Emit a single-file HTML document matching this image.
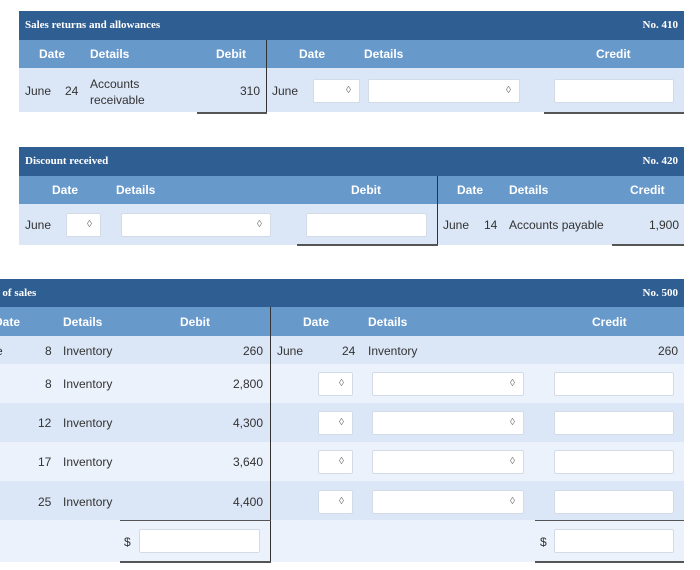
<!DOCTYPE html>
<html><head><style>
body{margin:0;width:700px;height:570px;background:#fff;position:relative;overflow:hidden;font-family:"Liberation Sans",sans-serif;font-size:12px;color:#333}
div{position:absolute;box-sizing:border-box}
.t{background:#2f5e93;color:#fff;font-family:"Liberation Serif",serif;font-weight:bold;font-size:11px;line-height:29px;padding-left:6px}
.h{background:#6899cb;color:#fff;font-weight:bold;font-size:12px}
.r1{background:#dbe6f6}
.r2{background:#ebf2fc}
.in{background:#fff;border:1px solid #d3dbe6;border-radius:2px}
.s::after{content:"\25CA";position:absolute;right:8px;top:5px;font-size:10px;color:#777}
.vl{background:#333;width:1px}
.ul{background:#555;height:2px}
.x{white-space:nowrap}
</style></head><body>
<!-- Table 1 -->
<div class="t" style="left:19px;top:11px;width:665px;height:29px">Sales returns and allowances<span style="position:absolute;right:6px">No. 410</span></div>
<div class="h" style="left:19px;top:40px;width:665px;height:28px"></div>
<div class="x" style="left:39px;top:47px;color:#fff;font-weight:bold">Date</div>
<div class="x" style="left:90px;top:47px;color:#fff;font-weight:bold">Details</div>
<div class="x" style="left:216px;top:47px;color:#fff;font-weight:bold">Debit</div>
<div class="x" style="left:299px;top:47px;color:#fff;font-weight:bold">Date</div>
<div class="x" style="left:364px;top:47px;color:#fff;font-weight:bold">Details</div>
<div class="x" style="left:596px;top:47px;color:#fff;font-weight:bold">Credit</div>
<div class="r1" style="left:19px;top:68px;width:665px;height:44px"></div>
<div class="x" style="left:25px;top:84px">June</div>
<div class="x" style="left:65px;top:84px">24</div>
<div style="left:90px;top:76px;line-height:16px">Accounts<br>receivable</div>
<div class="x" style="left:240px;top:84px">310</div>
<div class="x" style="left:272px;top:84px">June</div>
<div class="in s" style="left:313px;top:79px;width:47px;height:24px"></div>
<div class="in s" style="left:368px;top:79px;width:152px;height:24px"></div>
<div class="in" style="left:554px;top:79px;width:120px;height:24px"></div>
<div class="vl" style="left:266px;top:40px;height:73px"></div>
<div class="ul" style="left:197px;top:112px;width:70px"></div>
<div class="ul" style="left:544px;top:112px;width:140px"></div>
<!-- Table 2 -->
<div class="t" style="left:19px;top:147px;width:665px;height:29px">Discount received<span style="position:absolute;right:6px">No. 420</span></div>
<div class="h" style="left:19px;top:176px;width:665px;height:28px"></div>
<div class="x" style="left:52px;top:183px;color:#fff;font-weight:bold">Date</div>
<div class="x" style="left:116px;top:183px;color:#fff;font-weight:bold">Details</div>
<div class="x" style="left:351px;top:183px;color:#fff;font-weight:bold">Debit</div>
<div class="x" style="left:457px;top:183px;color:#fff;font-weight:bold">Date</div>
<div class="x" style="left:509px;top:183px;color:#fff;font-weight:bold">Details</div>
<div class="x" style="left:630px;top:183px;color:#fff;font-weight:bold">Credit</div>
<div class="r1" style="left:19px;top:204px;width:665px;height:41px"></div>
<div class="x" style="left:25px;top:218px">June</div>
<div class="in s" style="left:66px;top:213px;width:35px;height:24px"></div>
<div class="in s" style="left:121px;top:213px;width:150px;height:24px"></div>
<div class="in" style="left:306px;top:213px;width:121px;height:24px"></div>
<div class="x" style="left:443px;top:218px">June</div>
<div class="x" style="left:484px;top:218px">14</div>
<div class="x" style="left:509px;top:218px">Accounts payable</div>
<div class="x" style="left:649px;top:218px">1,900</div>
<div class="vl" style="left:437px;top:176px;height:70px"></div>
<div class="ul" style="left:297px;top:244px;width:141px"></div>
<div class="ul" style="left:612px;top:244px;width:72px"></div>
<!-- Table 3 -->
<div class="t" style="left:0;top:279px;width:684px;height:28px;padding-left:0;text-indent:-4px">t of sales<span style="position:absolute;right:6px">No. 500</span></div>
<div class="h" style="left:0;top:307px;width:684px;height:29px"></div>
<div class="x" style="left:-6px;top:315px;color:#fff;font-weight:bold">Date</div>
<div class="x" style="left:63px;top:315px;color:#fff;font-weight:bold">Details</div>
<div class="x" style="left:180px;top:315px;color:#fff;font-weight:bold">Debit</div>
<div class="x" style="left:303px;top:315px;color:#fff;font-weight:bold">Date</div>
<div class="x" style="left:368px;top:315px;color:#fff;font-weight:bold">Details</div>
<div class="x" style="left:592px;top:315px;color:#fff;font-weight:bold">Credit</div>
<div class="r1" style="left:0;top:336px;width:684px;height:28px"></div>
<div class="r2" style="left:0;top:364px;width:684px;height:39px"></div>
<div class="r1" style="left:0;top:403px;width:684px;height:39px"></div>
<div class="r2" style="left:0;top:442px;width:684px;height:39px"></div>
<div class="r1" style="left:0;top:481px;width:684px;height:39px"></div>
<div class="r2" style="left:0;top:520px;width:684px;height:42px"></div>
<div class="x" style="left:-4px;top:344px">e</div>
<div class="x" style="left:45px;top:344px">8</div><div class="x" style="left:63px;top:344px">Inventory</div><div class="x" style="left:243px;top:344px">260</div>
<div class="x" style="left:277px;top:344px">June</div><div class="x" style="left:342px;top:344px">24</div><div class="x" style="left:368px;top:344px">Inventory</div><div class="x" style="left:658px;top:344px">260</div>
<div class="x" style="left:45px;top:377px">8</div><div class="x" style="left:63px;top:377px">Inventory</div><div class="x" style="left:233px;top:377px">2,800</div>
<div class="x" style="left:38px;top:416px">12</div><div class="x" style="left:63px;top:416px">Inventory</div><div class="x" style="left:233px;top:416px">4,300</div>
<div class="x" style="left:38px;top:455px">17</div><div class="x" style="left:63px;top:455px">Inventory</div><div class="x" style="left:233px;top:455px">3,640</div>
<div class="x" style="left:38px;top:495px">25</div><div class="x" style="left:63px;top:495px">Inventory</div><div class="x" style="left:233px;top:495px">4,400</div>
<div class="in s" style="left:318px;top:372px;width:35px;height:24px"></div>
<div class="in s" style="left:372px;top:372px;width:152px;height:24px"></div>
<div class="in" style="left:554px;top:372px;width:120px;height:24px"></div>
<div class="in s" style="left:318px;top:411px;width:35px;height:24px"></div>
<div class="in s" style="left:372px;top:411px;width:152px;height:24px"></div>
<div class="in" style="left:554px;top:411px;width:120px;height:24px"></div>
<div class="in s" style="left:318px;top:450px;width:35px;height:24px"></div>
<div class="in s" style="left:372px;top:450px;width:152px;height:24px"></div>
<div class="in" style="left:554px;top:450px;width:120px;height:24px"></div>
<div class="in s" style="left:318px;top:490px;width:35px;height:24px"></div>
<div class="in s" style="left:372px;top:490px;width:152px;height:24px"></div>
<div class="in" style="left:554px;top:490px;width:120px;height:24px"></div>
<div class="x" style="left:124px;top:535px">$</div>
<div class="in" style="left:139px;top:529px;width:121px;height:24px"></div>
<div class="x" style="left:540px;top:535px">$</div>
<div class="in" style="left:554px;top:529px;width:120px;height:24px"></div>
<div class="vl" style="left:270px;top:307px;height:256px"></div>
<div class="ul" style="left:120px;top:520px;width:151px;height:1px"></div>
<div class="ul" style="left:120px;top:561px;width:151px"></div>
<div class="ul" style="left:535px;top:520px;width:149px;height:1px"></div>
<div class="ul" style="left:535px;top:561px;width:149px"></div>
</body></html>
